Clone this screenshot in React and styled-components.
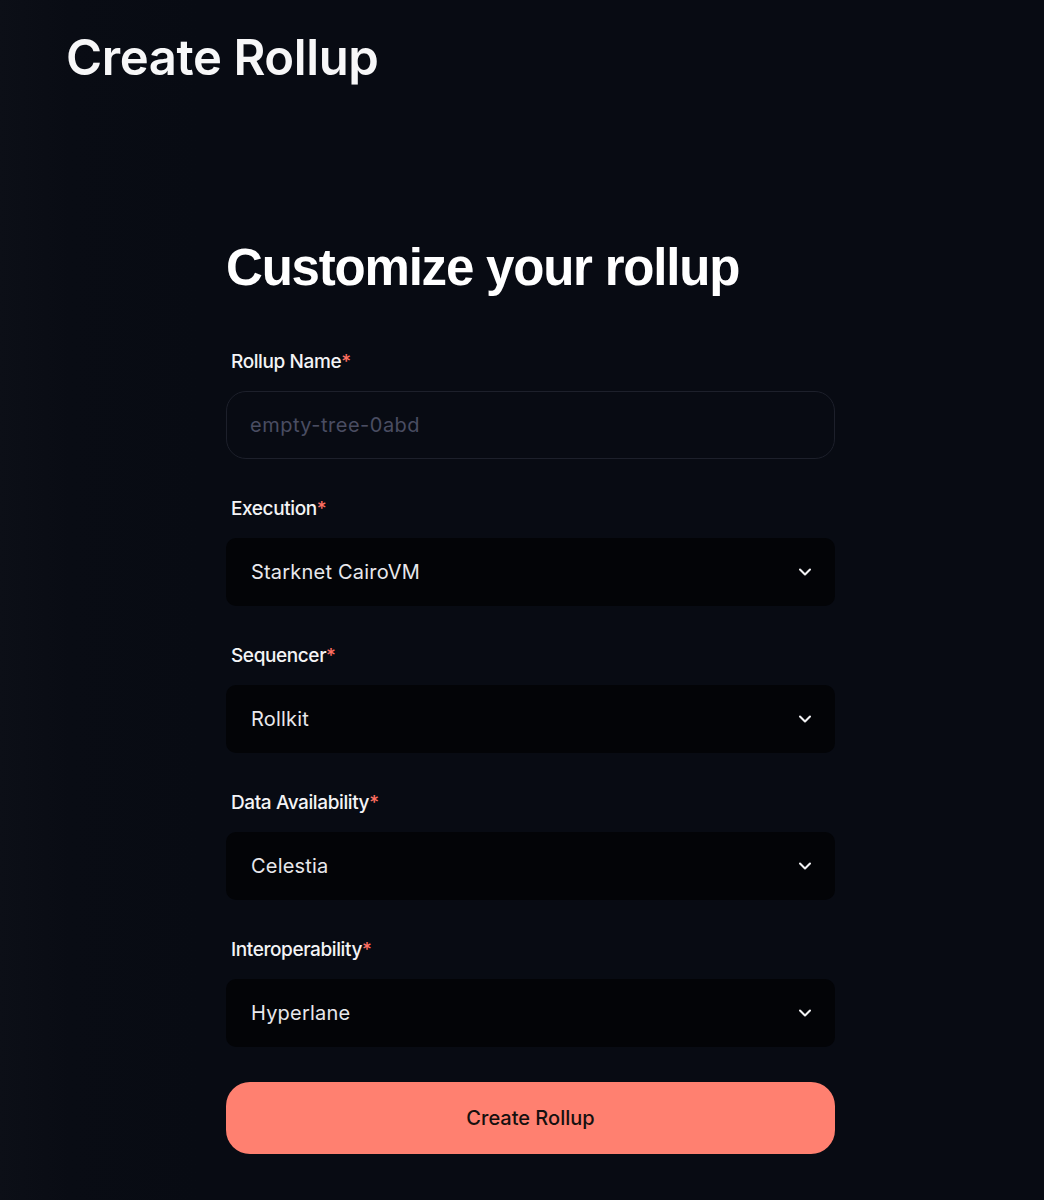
import React from "react";
import styled, { createGlobalStyle } from "styled-components";
import { ChevronDown } from "lucide-react";

const GlobalStyle = createGlobalStyle`
  html, body {
    margin: 0;
    padding: 0;
    background: #080b13;
  }
  * { box-sizing: border-box; }
`;

const Page = styled.div`
  min-height: 1200px;
  background: linear-gradient(90deg, #0c0f17 0px, #090c14 70px, #080b13 200px, #080b13 100%);
  font-family: Inter, "Noto Sans", sans-serif;
  color: #fff;
  overflow: hidden;
`;

const Header = styled.header`
  padding: 28px 0 0 66px;
`;

const Title = styled.h1`
  margin: 0;
  font-family: Inter, sans-serif;
  font-weight: 600;
  font-size: 49px;
  line-height: 60px;
  letter-spacing: -0.4px;
  color: #f7f7f8;
`;

const Main = styled.main`
  padding: 150px 0 0 226px;
`;

const Form = styled.form`
  width: 609px;
  display: flex;
  flex-direction: column;
`;

const Heading = styled.h2`
  margin: 0 0 52px;
  font-family: "Liberation Sans", Arial, sans-serif;
  font-weight: 700;
  font-size: 51px;
  line-height: 60px;
  letter-spacing: -1.2px;
  color: #fff;
`;

const Field = styled.div`
  display: flex;
  flex-direction: column;
  gap: 17px;
  margin-bottom: 38px;
`;

const Label = styled.label`
  padding-left: 5px;
  font-size: 19px;
  line-height: 24px;
  font-weight: 500;
  letter-spacing: -0.4px;
  color: #f4f4f6;

  span {
    color: #ff6f61;
  }
`;

const Input = styled.input`
  height: 68px;
  width: 100%;
  padding: 0 23px;
  border: 1px solid #1d202b;
  border-radius: 20px;
  background: #080b13;
  font-family: Inter, sans-serif;
  font-size: 20px;
  letter-spacing: 0.5px;
  color: #fff;
  outline: none;

  &::placeholder {
    color: #4a4d62;
  }
`;

const Select = styled.div`
  height: 68px;
  display: flex;
  align-items: center;
  justify-content: space-between;
  padding: 0 20px 0 25px;
  border-radius: 10px;
  background: #030407;
  font-size: 20px;
  letter-spacing: 0.2px;
  color: #e8e8ec;
  cursor: pointer;
`;

const Button = styled.button`
  margin-top: -3px;
  height: 72px;
  width: 100%;
  border: none;
  border-radius: 24px;
  background: #ff8070;
  font-family: Inter, sans-serif;
  font-size: 20px;
  font-weight: 500;
  color: #15100f;
  cursor: pointer;
`;

const selects = [
  { label: "Execution", value: "Starknet CairoVM" },
  { label: "Sequencer", value: "Rollkit" },
  { label: "Data Availability", value: "Celestia" },
  { label: "Interoperability", value: "Hyperlane" },
];

export default function App() {
  return (
    <Page>
      <GlobalStyle />
      <Header>
        <Title>Create Rollup</Title>
      </Header>
      <Main>
        <Form onSubmit={e => e.preventDefault()}>
          <Heading>Customize your rollup</Heading>
          <Field>
            <Label>
              Rollup Name<span>*</span>
            </Label>
            <Input placeholder="empty-tree-0abd" />
          </Field>
          {selects.map(item => (
            <Field key={item.label}>
              <Label>
                {item.label}
                <span>*</span>
              </Label>
              <Select>
                {item.value}
                <ChevronDown size={20} strokeWidth={2.5} color="#f2f2f4" />
              </Select>
            </Field>
          ))}
          <Button type="submit">Create Rollup</Button>
        </Form>
      </Main>
    </Page>
  );
}
